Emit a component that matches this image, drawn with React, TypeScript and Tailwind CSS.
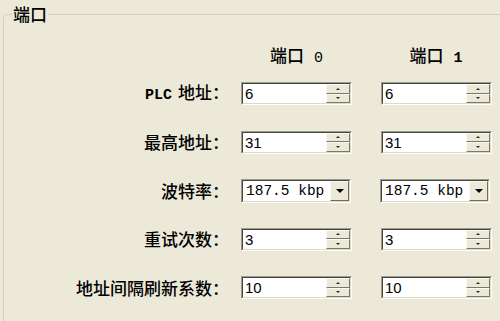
import React from "react";

const cjk = "font-['Noto_Sans_CJK_SC',sans-serif] font-medium";

type Row = { label: React.ReactNode; kind: "spin" | "combo"; values: [string, string] };

const rows: Row[] = [
  {
    label: (
      <>
        <span className="mr-[6px] font-['Liberation_Mono',monospace] text-[15px] font-bold">PLC</span>
        地址：
      </>
    ),
    kind: "spin",
    values: ["6", "6"],
  },
  { label: "最高地址：", kind: "spin", values: ["31", "31"] },
  { label: "波特率：", kind: "combo", values: ["187.5 kbp", "187.5 kbp"] },
  { label: "重试次数：", kind: "spin", values: ["3", "3"] },
  { label: "地址间隔刷新系数：", kind: "spin", values: ["10", "10"] },
];

function Sunken({ children }: { children: React.ReactNode }) {
  return (
    <div className="h-full border border-t-[#9C9B90] border-l-[#9C9B90] border-r-[#FFFFFF] border-b-[#FFFFFF]">
      <div className="flex h-full border border-t-[#45453E] border-l-[#45453E] border-r-[#DCD9C8] border-b-[#DCD9C8] bg-white">
        {children}
      </div>
    </div>
  );
}

function SpinButton({ up }: { up: boolean }) {
  return (
    <div className="flex flex-1 items-center justify-center border border-t-[#FBFAF5] border-l-[#FBFAF5] border-r-[#7A7968] border-b-[#7A7968] bg-[#ECE9D8]">
      <svg width="4" height="2" viewBox="0 0 4 2">
        <polygon points={up ? "2,0 4,2 0,2" : "0,0 4,0 2,2"} fill="#222" />
      </svg>
    </div>
  );
}

function SpinBox({ value }: { value: string }) {
  return (
    <div className="h-[23px] w-[111px]">
      <Sunken>
        <span className="flex-1 pl-[2px] font-['Liberation_Sans',sans-serif] text-[15px] leading-[19px] text-black">
          {value}
        </span>
        <div className="flex w-[24px] flex-col">
          <SpinButton up />
          <SpinButton up={false} />
        </div>
      </Sunken>
    </div>
  );
}

function ComboBox({ value }: { value: string }) {
  return (
    <div className="h-[24px] w-[110px]">
      <Sunken>
        <span className="flex-1 pl-[3px] font-['Liberation_Mono',monospace] text-[14.5px] leading-[20px] text-black">
          {value}
        </span>
        <div className="flex w-[19px] items-center justify-center border border-t-[#FBFAF5] border-l-[#FBFAF5] border-r-[#6E6D60] border-b-[#6E6D60] bg-[#ECE9D8]">
          <svg width="8" height="4" viewBox="0 0 8 4">
            <polygon points="0,0 8,0 4,4" fill="#000" />
          </svg>
        </div>
      </Sunken>
    </div>
  );
}

export default function App() {
  return (
    <div className="h-[321px] w-[500px] overflow-hidden bg-[#ECE9D8] text-black">
      <fieldset className="ml-[3px] mt-[5px] h-[340px] w-[520px] rounded-[4px] border border-[#D0D0BF]">
        <legend className={`ml-[8px] px-[1px] text-[17px] leading-[18px] ${cjk}`}>端口</legend>

        <div className="mt-[25px] flex h-[18px] items-center">
          <div className="w-[225px]" />
          <div className={`ml-[12px] w-[111px] text-center text-[17px] leading-[18px] ${cjk}`}>
            端口<span className="ml-[10px] font-['Liberation_Mono',monospace] text-[15px] font-normal">0</span>
          </div>
          <div className={`ml-[29px] w-[110px] text-center text-[17px] leading-[18px] ${cjk}`}>
            端口<span className="ml-[10px] font-['Liberation_Mono',monospace] text-[15px] font-bold">1</span>
          </div>
        </div>

        {rows.map((row, i) => (
          <div key={i} className={`flex h-[23px] items-center ${i === 0 ? "mt-[16px]" : "mt-[25.5px]"}`}>
            <div className={`w-[225px] text-right text-[17px] leading-[20px] ${cjk}`}>{row.label}</div>
            <div className="ml-[12px]">
              {row.kind === "spin" ? <SpinBox value={row.values[0]} /> : <ComboBox value={row.values[0]} />}
            </div>
            <div className="ml-[29px]">
              {row.kind === "spin" ? <SpinBox value={row.values[1]} /> : <ComboBox value={row.values[1]} />}
            </div>
          </div>
        ))}
      </fieldset>
    </div>
  );
}
